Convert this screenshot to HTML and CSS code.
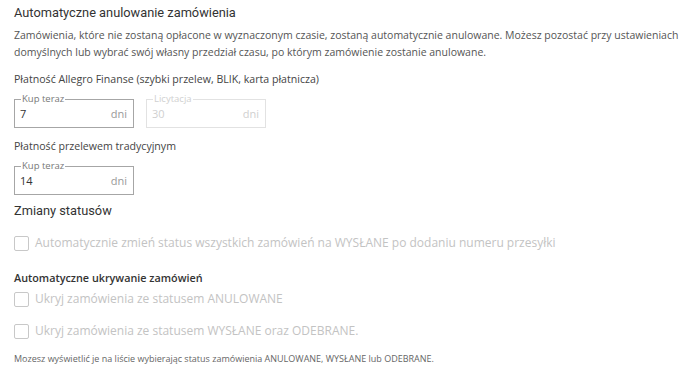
FILE: index.html
```html
<!DOCTYPE html>
<html lang="pl">
<head>
  <meta charset="UTF-8" />
  <title>Ustawienia zamówień</title>
  <link rel="stylesheet" href="styles.css">
</head>
<body>
  <div class="settings">

    <!-- Anulowanie -->
    <h2 class="section-title">Automatyczne anulowanie zamówienia</h2>
    <p class="description">Zamówienia, które nie zostaną opłacone w wyznaczonym czasie, zostaną automatycznie anulowane. Możesz pozostać przy ustawieniach domyślnych lub wybrać swój własny przedział czasu, po którym zamówienie zostanie anulowane.</p>

    <div class="payment-group">
      <div class="group-label">Płatność Allegro Finanse (szybki przelew, BLIK, karta płatnicza)</div>
      <div class="fields">
        <fieldset class="day-field">
          <legend>Kup teraz</legend>
          <span class="value">7</span>
          <span class="unit">dni</span>
        </fieldset>
        <fieldset class="day-field disabled">
          <legend>Licytacja</legend>
          <span class="value">30</span>
          <span class="unit">dni</span>
        </fieldset>
      </div>
    </div>

    <div class="payment-group">
      <div class="group-label">Płatność przelewem tradycyjnym</div>
      <div class="fields">
        <fieldset class="day-field">
          <legend>Kup teraz</legend>
          <span class="value">14</span>
          <span class="unit">dni</span>
        </fieldset>
      </div>
    </div>

    <!-- Statusy -->
    <h2 class="section-title status-title">Zmiany statusów</h2>
    <label class="check disabled">
      <span class="box"></span>
      Automatycznie zmień status wszystkich zamówień na WYSŁANE po dodaniu numeru przesyłki
    </label>

    <!-- Ukrywanie -->
    <h3 class="sub-title">Automatyczne ukrywanie zamówień</h3>
    <label class="check disabled">
      <span class="box"></span>
      Ukryj zamówienia ze statusem ANULOWANE
    </label>
    <label class="check disabled">
      <span class="box"></span>
      Ukryj zamówienia ze statusem WYSŁANE oraz ODEBRANE.
    </label>
    <p class="note">Mozesz wyświetlić je na liście wybierając status zamówienia ANULOWANE, WYSŁANE lub ODEBRANE.</p>

  </div>
</body>
</html>
```

FILE: styles.css
```css
* {
  margin: 0;
  padding: 0;
  box-sizing: border-box;
}

body {
  font-family: 'Open Sans', sans-serif;
  background: #fff;
  color: #555;
}

.settings {
  padding: 4px 6px 0 14px;
}

/* Section headings */
.section-title {
  font-family: 'Roboto', sans-serif;
  font-weight: 400;
  font-size: 12.8px;
  line-height: 18px;
  color: #333;
}

.description {
  font-size: 10.5px;
  line-height: 17px;
  margin-top: 5px;
}

/* Payment groups */
.payment-group {
  margin-top: 10px;
}

.group-label {
  font-size: 10.6px;
  line-height: 17px;
  color: #444;
}

.fields {
  display: flex;
  gap: 12px;
  margin-top: 5px;
}

.day-field {
  width: 120px;
  height: 35px;
  border: 1px solid #a6a6a6;
  padding: 0 6px 0 5px;
  display: flex;
  align-items: center;
  justify-content: space-between;
}
.day-field legend {
  font-size: 9.5px;
  line-height: 12px;
  color: #777;
  margin-left: 1px;
  padding: 0 1px;
}
.day-field .value {
  font-size: 11px;
  color: #333;
  margin-top: -6px;
}
.day-field .unit {
  font-size: 11px;
  color: #999;
  margin-top: -6px;
}

.day-field.disabled {
  border-color: #e2e2e2;
}
.day-field.disabled legend,
.day-field.disabled .value,
.day-field.disabled .unit {
  color: #d0d0d0;
}

/* Status section */
.status-title {
  margin-top: 7px;
}

.check {
  display: flex;
  align-items: center;
  gap: 6px;
  font-size: 12px;
  line-height: 18px;
  margin-top: 14px;
}
.check .box {
  width: 15px;
  height: 15px;
  border: 1px solid #c8c8c8;
  border-radius: 2px;
  flex-shrink: 0;
}
.check.disabled {
  color: #c3c3c3;
}

.sub-title {
  font-size: 10.8px;
  font-weight: 600;
  line-height: 17px;
  color: #333;
  margin-top: 17px;
}

.sub-title + .check {
  margin-top: 4px;
}

.note {
  font-size: 9px;
  line-height: 12px;
  color: #666;
  margin-top: 13px;
}
```
